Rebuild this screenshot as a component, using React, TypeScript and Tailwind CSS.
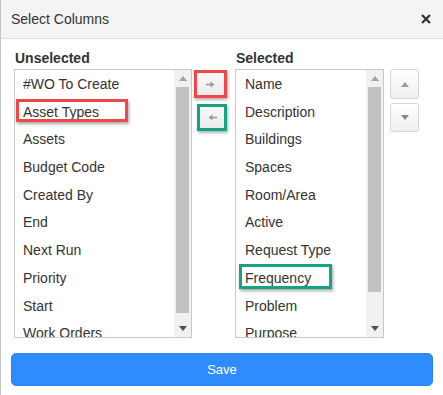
import React from "react";

const leftItems = [
  "#WO To Create",
  "Asset Types",
  "Assets",
  "Budget Code",
  "Created By",
  "End",
  "Next Run",
  "Priority",
  "Start",
  "Work Orders",
];
const rightItems = [
  "Name",
  "Description",
  "Buildings",
  "Spaces",
  "Room/Area",
  "Active",
  "Request Type",
  "Frequency",
  "Problem",
  "Purpose",
];

function Tri({ up, color }: { up?: boolean; color: string }) {
  return (
    <svg width="8" height="5" viewBox="0 0 8 5">
      {up ? (
        <polygon points="0,5 8,5 4,0" fill={color} />
      ) : (
        <polygon points="0,0 8,0 4,5" fill={color} />
      )}
    </svg>
  );
}

function Scrollbar({ thumbH }: { thumbH: number }) {
  return (
    <div className="w-[17px] shrink-0 bg-[#f1f1f1] flex flex-col">
      <div className="h-[17px] flex items-center justify-center">
        <Tri up color="#a3a3a3" />
      </div>
      <div className="flex-1 px-[2px]">
        <div className="bg-[#c1c1c1] w-full" style={{ height: thumbH }} />
      </div>
      <div className="h-[17px] flex items-center justify-center">
        <Tri color="#505050" />
      </div>
    </div>
  );
}

function ListBox({
  items,
  width,
  thumbH,
  pad,
  highlight,
}: {
  items: string[];
  width: string;
  thumbH: number;
  pad: string;
  highlight: (i: number) => React.ReactNode;
}) {
  return (
    <div className={`${width} h-[269px] border border-[#c8c8c8] flex bg-white`}>
      <div className="flex-1 overflow-hidden">
        {items.map((t, i) => (
          <div
            key={t}
            className={`relative h-[27.7px] pt-[2px] leading-[25.7px] text-[14px] whitespace-nowrap ${pad}`}
          >
            {highlight(i)}
            {t}
          </div>
        ))}
      </div>
      <Scrollbar thumbH={thumbH} />
    </div>
  );
}

function ArrowIcon({ dir }: { dir: "right" | "left" }) {
  return (
    <svg width="9" height="7" viewBox="0 0 9 7">
      {dir === "right" ? (
        <g fill="#9a9a9a">
          <rect x="0" y="2.7" width="5" height="1.6" />
          <polygon points="4.5,0.5 8.5,3.5 4.5,6.5" />
        </g>
      ) : (
        <g fill="#9a9a9a">
          <rect x="4" y="2.7" width="5" height="1.6" />
          <polygon points="4.5,0.5 0.5,3.5 4.5,6.5" />
        </g>
      )}
    </svg>
  );
}

export default function App() {
  return (
    <div className="w-[443px] h-[395px] bg-white border-l border-[#c4c4c4] overflow-hidden text-[#333] font-['Liberation_Sans',Arial,sans-serif]">
      <div className="h-[39px] bg-[#f4f4f4] border-b border-[#dedede] flex items-center justify-between pl-[10px] pr-[12px]">
        <span className="text-[14px]">Select Columns</span>
        <svg width="10" height="10" viewBox="0 0 10 10">
          <path d="M1 1 L9 9 M9 1 L1 9" stroke="#333" strokeWidth="2.2" />
        </svg>
      </div>
      <div className="flex pl-[13px] pt-[9px]">
        <div className="flex flex-col">
          <div className="h-[20px] leading-[20px] text-[14px] font-bold pl-[1px] mb-[1px]">
            Unselected
          </div>
          <ListBox
            items={leftItems}
            width="w-[178px]"
            thumbH={226}
            pad="pl-[8px]"
            highlight={(i) =>
              i === 1 ? (
                <div className="absolute left-[1px] top-[1px] w-[112px] h-[23px] border-[3px] border-[#f04848] shadow-[1px_2px_3px_rgba(0,0,0,0.35)]" />
              ) : null
            }
          />
        </div>
        <div className="w-[43px] pt-[22px] pl-[2px] flex flex-col">
          <div className="w-[33px] h-[28px] border-[3px] border-[#f04848] shadow-[1px_2px_3px_rgba(0,0,0,0.3)] bg-gradient-to-b from-[#f8f8f8] to-[#ececec] flex items-center justify-center">
            <ArrowIcon dir="right" />
          </div>
          <div className="ml-[3px] mt-[6px] w-[30px] h-[27px] border-[3px] border-[#14a383] shadow-[1px_2px_3px_rgba(0,0,0,0.3)] bg-gradient-to-b from-[#f8f8f8] to-[#ececec] flex items-center justify-center">
            <ArrowIcon dir="left" />
          </div>
        </div>
        <div className="flex flex-col">
          <div className="h-[20px] leading-[20px] text-[14px] font-bold pl-[1px] mb-[1px]">
            Selected
          </div>
          <ListBox
            items={rightItems}
            width="w-[149px]"
            thumbH={205}
            pad="pl-[9px]"
            highlight={(i) =>
              i === 7 ? (
                <div className="absolute left-[3px] top-[0px] w-[93px] h-[25px] border-[3px] border-[#14a383] shadow-[1px_2px_3px_rgba(0,0,0,0.35)]" />
              ) : null
            }
          />
        </div>
        <div className="ml-[6px] pt-[21px] flex flex-col gap-[4px]">
          <div className="w-[29px] h-[30px] rounded-[3px] border border-[#d6d6d6] bg-gradient-to-b from-white to-[#efefef] flex items-center justify-center">
            <Tri up color="#9c9c9c" />
          </div>
          <div className="w-[29px] h-[29px] rounded-[3px] border border-[#d6d6d6] bg-gradient-to-b from-white to-[#efefef] flex items-center justify-center">
            <Tri color="#858585" />
          </div>
        </div>
      </div>
      <div className="px-[10px] pt-[15px]">
        <div className="h-[33px] rounded-[5px] bg-[#2e8cff] border border-[#2a82ee] flex items-center justify-center text-white text-[13px]">
          Save
        </div>
      </div>
    </div>
  );
}
